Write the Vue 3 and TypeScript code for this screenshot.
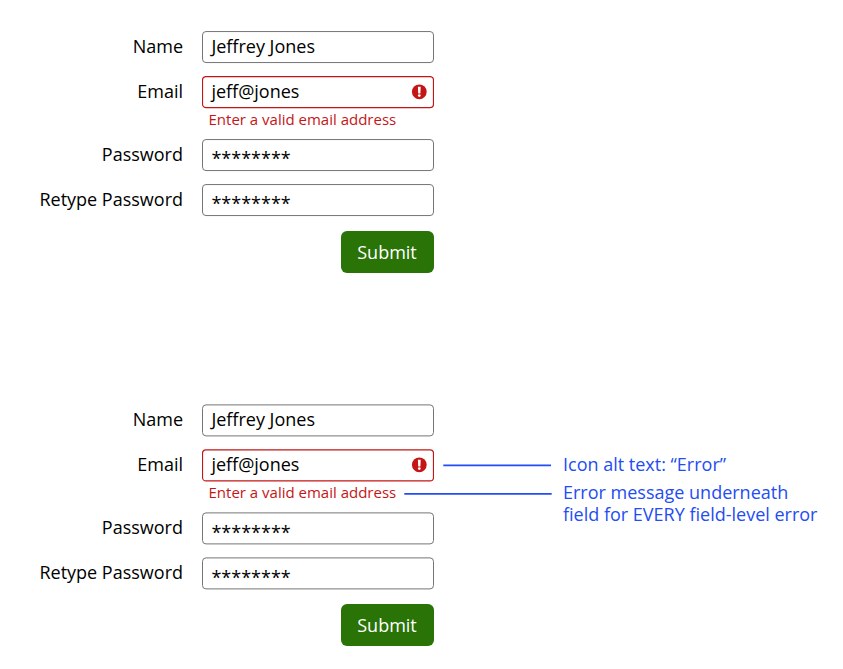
<script setup lang="ts">
interface Field {
  label: string
  value: string
  secret?: boolean
  error?: string
}

interface Example {
  id: string
  annotated: boolean
}

const fields: Field[] = [
  { label: 'Name', value: 'Jeffrey Jones' },
  { label: 'Email', value: 'jeff@jones', error: 'Enter a valid email address' },
  { label: 'Password', value: '********', secret: true },
  { label: 'Retype Password', value: '********', secret: true },
]

const examples: Example[] = [
  { id: 'plain', annotated: false },
  { id: 'annotated', annotated: true },
]
</script>

<template>
  <main class="page">
    <section v-for="ex in examples" :key="ex.id" class="example" :class="{ annotated: ex.annotated }">
      <form class="form" @submit.prevent>
        <div v-for="f in fields" :key="f.label" class="row" :class="{ invalid: f.error }">
          <span class="label">{{ f.label }}</span>
          <div class="control">
            <div class="box">
              <svg class="frame" width="232" height="33" aria-hidden="true">
                <rect x="0.5" :y="ex.annotated ? 0.9 : 0.55" width="231" height="31" rx="3.5" />
              </svg>
              <span class="value" :class="{ secret: f.secret }">{{ f.value }}</span>
              <svg v-if="f.error" class="icon" width="16" height="16" viewBox="0 0 16 16" role="img" aria-label="Error">
                <circle cx="8.3" cy="7.8" r="7.4" fill="#c41616" />
                <path d="M6.9 2.8h2.8l-.3 6.6h-2.2z" fill="#fff" />
                <circle cx="8.3" cy="11.6" r="1.35" fill="#fff" />
              </svg>
            </div>
            <p v-if="f.error" class="error">{{ f.error }}</p>
          </div>
        </div>
        <button class="submit" type="submit">Submit</button>
      </form>
      <aside v-if="ex.annotated" class="notes">
        <div class="note">
          <svg class="line" width="148" height="4" aria-hidden="true"><path d="M39.3 2.4H147" /></svg>
          <p class="text">Icon alt text: “Error”</p>
        </div>
        <div class="note">
          <svg class="line" width="148" height="4" aria-hidden="true"><path d="M0.3 2.9H147.7" /></svg>
          <p class="text">Error message underneath<br />field for EVERY field-level error</p>
        </div>
      </aside>
    </section>
  </main>
</template>

<style>
body {
  background: #fff;
}
</style>

<style scoped>
.page {
  box-sizing: border-box;
  width: 843px;
  height: 669px;
  padding-top: 31px;
  overflow: hidden;
  font-family: 'Open Sans', 'Noto Sans', sans-serif;
  font-size: 18px;
  line-height: 22px;
  color: #000;
}
.example {
  display: flex;
  height: 373px;
}
.form {
  width: 434px;
  flex: none;
  display: flex;
  flex-direction: column;
}
.row {
  display: flex;
  height: 45px;
  flex: none;
}
.row.invalid {
  height: 63px;
}
.label {
  width: 183px;
  margin-right: 19px;
  text-align: right;
  line-height: 30px;
}
.control {
  width: 232px;
}
.box {
  position: relative;
  box-sizing: border-box;
  height: 32px;
  padding: 0 7px 0 9.4px;
  display: flex;
  align-items: center;
  justify-content: space-between;
}
.frame {
  position: absolute;
  left: 0;
  top: 0;
}
.frame rect {
  fill: #fff;
  stroke: #757575;
  stroke-width: 1;
}
.invalid .frame rect {
  stroke: #c41616;
  stroke-width: 1.2;
}
.value {
  position: relative;
  line-height: 30px;
  padding-bottom: 2px;
}
.secret {
  padding: 6px 0 0;
}
.annotated .secret {
  padding-top: 8px;
}
.icon {
  position: relative;
}
.error {
  margin: 0 0 0 6.5px;
  font-size: 15px;
  line-height: 22px;
  color: #c41616;
  white-space: nowrap;
}
.submit {
  align-self: flex-end;
  width: 93px;
  height: 42px;
  margin: 2px 0.5px 0 0;
  padding: 0;
  border: 0;
  border-radius: 6px;
  background: #297307;
  color: #fff;
  font: inherit;
}
.notes {
  padding-top: 49px;
  margin-left: -30px;
  color: #234df2;
}
.note {
  display: flex;
  height: 28px;
}
.line {
  flex: none;
  margin: 10px 11px 0 0;
}
.line path {
  stroke: #234df2;
  stroke-width: 1.6;
}
.text {
  margin: 0;
  white-space: nowrap;
}
</style>
